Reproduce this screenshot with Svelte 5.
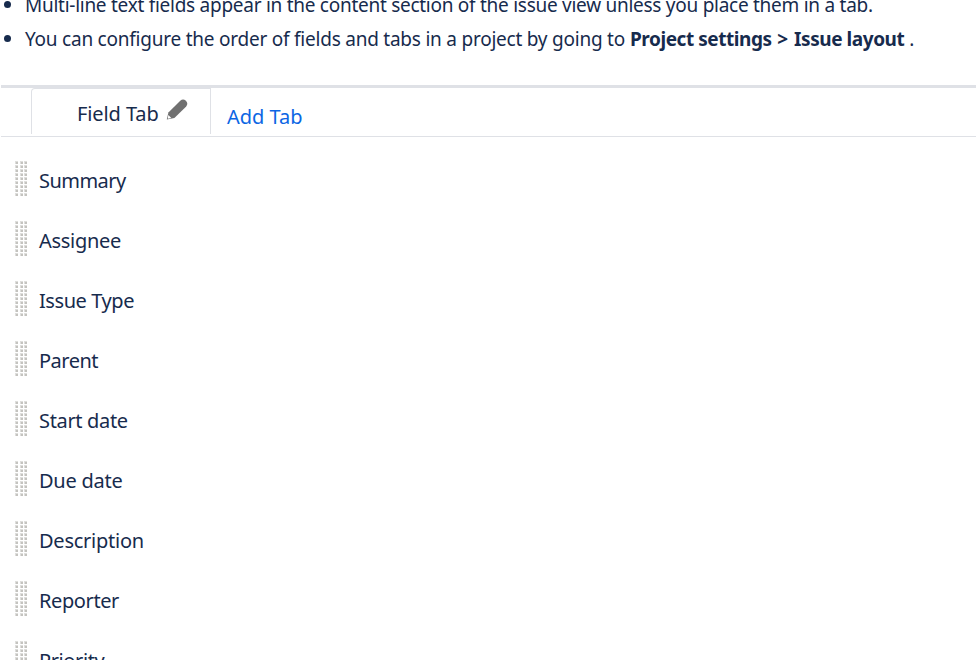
<script lang="ts">
    // tracking is tuned per label, in px
    let fields = $state([
        { name: "Summary", spacing: -0.55 },
        { name: "Assignee", spacing: -0.3 },
        { name: "Issue Type", spacing: -0.42 },
        { name: "Parent", spacing: -0.5 },
        { name: "Start date", spacing: -0.33 },
        { name: "Due date", spacing: -0.25 },
        { name: "Description", spacing: -0.25 },
        { name: "Reporter", spacing: -0.4 },
        { name: "Priority", spacing: -0.4 },
    ]);
</script>

<div class="page">
    <ul class="notes">
        <li><span class="first">Multi-line text fields appear in the content section of the issue view unless you place them in a tab.</span></li>
        <li><span class="second">You can configure the order of fields and tabs in a project by going to</span> <strong>Project settings <span class="arrow">&gt;</span> Issue layout</strong> .</li>
    </ul>

    <div class="tabs">
        <div class="tab">
            <span class="label">Field Tab</span>
            <svg class="pencil" width="22" height="22" viewBox="0 0 22 22">
                <path d="M.8 20.5 L2.4 13.4 L14.3 1.7 Q17 -.8 19.9 1.7 Q22.5 4.6 20.2 7.5 L8.4 19 Z" fill="#707070" />
                <path d="M2.3 16 L5.3 19 L1.8 19.8 Z" fill="#fff" />
            </svg>
        </div>
        <a class="add" href="#add">Add Tab</a>
    </div>

    <div class="fields">
        {#each fields as field}
            <div class="field">
                <svg class="grip" width="13" height="36" viewBox="0 0 13 36">
                    {#each Array(9) as _, row}
                        {#each [0, 5, 9] as x}
                            <rect {x} y={row * 4} width="3" height="3" fill="#dededc" />
                            <rect x={x + 1} y={row * 4 + 1} width="2" height="2" fill="#c4c3bf" />
                        {/each}
                    {/each}
                </svg>
                <span class="name" style="letter-spacing: {field.spacing}px">{field.name}</span>
            </div>
        {/each}
    </div>
</div>

<style>
    .page {
        height: 660px;
        overflow: hidden;
        background: #fff;
        color: #172b4d;
        font-family: "Segoe UI", "Noto Sans", sans-serif;
        font-size: 20px;
        line-height: 34px;
        white-space: nowrap;
    }

    .notes {
        margin: -12px 0 0;
        padding: 0 0 0 25px;
        list-style: none;
        height: 97px;
        font-size: 19px;
    }

    .notes li {
        height: 34px;
    }

    .notes li::before {
        content: "";
        float: left;
        width: 7px;
        height: 7px;
        border-radius: 50%;
        background: #172b4d;
        margin: 13px 0 0 -21px;
    }

    .first {
        letter-spacing: -0.27px;
    }

    .second {
        letter-spacing: -0.23px;
    }

    strong {
        letter-spacing: -0.44px;
    }

    .arrow {
        margin: 0 2px 0 1px;
    }

    .tabs {
        display: flex;
        box-sizing: border-box;
        height: 52px;
        margin-left: 1px;
        padding-left: 30px;
        border-top: 3px solid #dfe1e6;
        border-bottom: 1px solid #dfe1e6;
    }

    .tab {
        display: flex;
        box-sizing: border-box;
        width: 180px;
        height: 46px;
        padding-left: 45px;
        border: 1px solid #dfe1e6;
        border-bottom: none;
        border-radius: 4px 0 0 0;
    }

    .add {
        color: #0c66e4;
        text-decoration: none;
        margin: 12px 0 0 16px;
    }

    .label {
        margin-top: 8px;
        letter-spacing: -0.1px;
    }

    .pencil {
        margin: 10px 0 0 7px;
    }

    .fields {
        padding: 13px 0 0 15px;
    }

    .field {
        display: flex;
        height: 60px;
    }

    .grip {
        margin: 11px 11px 0 0;
    }

    .name {
        margin-top: 14px;
    }
</style>
